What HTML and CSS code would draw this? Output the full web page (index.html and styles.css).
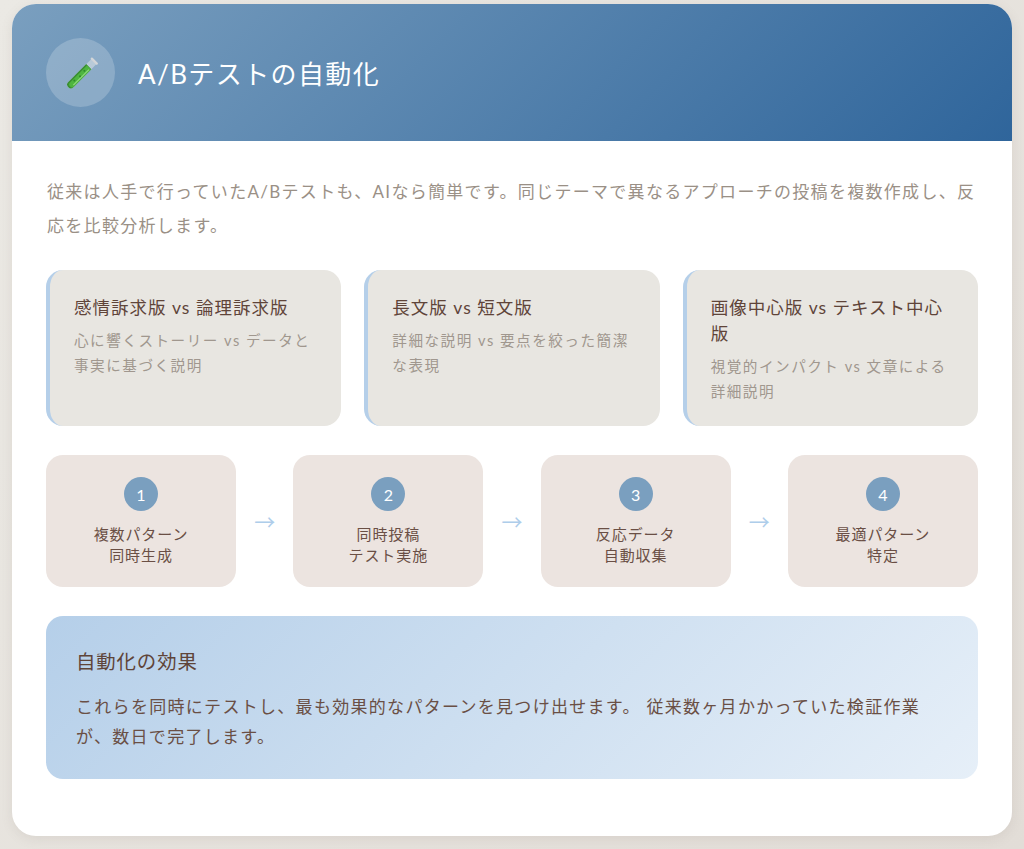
FILE: index.html
```html
<!DOCTYPE html>
<html lang="ja">
<head>
<meta charset="utf-8">
<title>A/Bテストの自動化</title>
<link rel="stylesheet" href="styles.css">
</head>
<body>
<main class="card">
  <header class="header">
    <div class="icon-circle">
      <svg class="tube" viewBox="0 0 32 32" width="32" height="32" aria-hidden="true">
        <g transform="rotate(45 16 16)">
          <path d="M13.4 -1h7.2v32.4a3.6 3.6 0 0 1-7.2 0z" fill="#d5dde2" fill-opacity=".6"/>
          <rect x="12.4" y="-3" width="9.2" height="2.4" rx="1.1" fill="#d3d6d8"/>
          <path d="M13.4 6h7.2v25.4a3.6 3.6 0 0 1-7.2 0z" fill="#3a8f32"/>
          <path d="M15 6.5h5.6v24a2.8 2.8 0 0 1-5.6 0z" fill="#4fb540"/>
          <path d="M18.6 8h1.2v22h-1.2z" fill="#8fd97f"/>
          <circle cx="16.8" cy="12" r="1" fill="#2f8a2a"/>
          <circle cx="17.6" cy="19" r="1" fill="#2f8a2a"/>
          <circle cx="16.6" cy="26" r="1" fill="#2f8a2a"/>
        </g>
      </svg>
    </div>
    <h1 class="title">A/Bテストの自動化</h1>
  </header>
  <div class="content">
    <p class="intro">従来は人手で行っていたA/Bテストも、AIなら簡単です。同じテーマで異なるアプローチの投稿を複数作成し、反応を比較分析します。</p>
    <section class="variants">
      <article class="variant">
        <h2 class="variant-title">感情訴求版 vs 論理訴求版</h2>
        <p class="variant-text">心に響くストーリー vs データと事実に基づく説明</p>
      </article>
      <article class="variant">
        <h2 class="variant-title">長文版 vs 短文版</h2>
        <p class="variant-text">詳細な説明 vs 要点を絞った簡潔な表現</p>
      </article>
      <article class="variant">
        <h2 class="variant-title">画像中心版 vs テキスト中心版</h2>
        <p class="variant-text">視覚的インパクト vs 文章による詳細説明</p>
      </article>
    </section>
    <section class="flow">
      <div class="step"><span class="num">1</span><p class="step-text">複数パターン<br>同時生成</p></div>
      <span class="arrow">→</span>
      <div class="step"><span class="num">2</span><p class="step-text">同時投稿<br>テスト実施</p></div>
      <span class="arrow">→</span>
      <div class="step"><span class="num">3</span><p class="step-text">反応データ<br>自動収集</p></div>
      <span class="arrow">→</span>
      <div class="step"><span class="num">4</span><p class="step-text">最適パターン<br>特定</p></div>
    </section>
    <section class="result">
      <h2 class="result-title">自動化の効果</h2>
      <p class="result-text">これらを同時にテストし、最も効果的なパターンを見つけ出せます。 従来数ヶ月かかっていた検証作業が、数日で完了します。</p>
    </section>
  </div>
</main>
</body>
</html>
```

FILE: styles.css
```css
* { box-sizing: border-box; }
html, body { margin: 0; height: 100%; }
body {
  background: linear-gradient(135deg, #ebe9e4 0%, #e2ddd7 100%);
  padding: 4px 12px 13px;
  font-family: "Lato", "Noto Sans CJK JP", sans-serif;
  overflow: hidden;
}
.card {
  width: 1000px;
  height: 832px;
  background: #fff;
  border-radius: 24px;
  overflow: hidden;
  box-shadow: 0 3px 12px rgba(120, 110, 100, .12);
}
.header {
  height: 137px;
  padding: 0 34px;
  display: flex;
  align-items: center;
  gap: 23px;
  background: linear-gradient(135deg, #7a9fbf 0%, #2f659b 100%);
}
.icon-circle {
  width: 69px;
  height: 69px;
  border-radius: 50%;
  background: rgba(255, 255, 255, .2);
  display: flex;
  align-items: center;
  justify-content: center;
}
.tube { overflow: visible; }
.title {
  margin: 0;
  color: #fff;
  font-size: 26px;
  font-weight: 400;
  letter-spacing: 1.4px;
}
.content { padding: 34px 34px 0; }
.intro {
  margin: 0 0 27px;
  padding-left: 1px;
  color: #9a9086;
  font-size: 17px;
  line-height: 34px;
  letter-spacing: 1.3px;
}
.variants {
  display: grid;
  grid-template-columns: repeat(3, 1fr);
  gap: 23px;
  margin-bottom: 29px;
}
.variant {
  background: #e8e6e1;
  border-left: 4.6px solid #b5cfe9;
  border-radius: 17px;
  padding: 25px 24px 22px;
}
.variant-title {
  margin: 0 0 8px;
  color: #5f4439;
  font-size: 17.5px;
  font-weight: 400;
  line-height: 26px;
  letter-spacing: 1px;
}
.variant-text {
  margin: 0;
  color: #a0978e;
  font-size: 14.6px;
  line-height: 24.6px;
  letter-spacing: 1.5px;
}
.flow {
  display: flex;
  align-items: center;
  justify-content: space-between;
  margin-bottom: 29px;
}
.step {
  width: 190px;
  height: 132px;
  padding-top: 22px;
  background: #ece4e0;
  border-radius: 17px;
  text-align: center;
}
.num {
  display: flex;
  align-items: center;
  justify-content: center;
  width: 34px;
  height: 34px;
  margin: 0 auto 13px;
  border-radius: 50%;
  background: #7a9fbf;
  color: #fff;
  font-size: 16px;
}
.step-text {
  margin: 0;
  color: #6a4f45;
  font-size: 15px;
  line-height: 21px;
  letter-spacing: .9px;
}
.arrow {
  color: #aecdea;
  font-size: 21px;
  line-height: 1;
  font-family: "Noto Sans CJK JP", sans-serif;
}
.result {
  height: 163px;
  padding: 29px 30px;
  border-radius: 17px;
  background: linear-gradient(135deg, #b5cfe9 0%, #e6eff8 100%);
}
.result-title {
  margin: 0 0 13px;
  color: #5f4439;
  font-size: 19.4px;
  font-weight: 400;
  line-height: 34px;
  letter-spacing: .9px;
}
.result-text {
  margin: 0;
  color: #6a4f45;
  font-size: 17px;
  line-height: 30px;
  letter-spacing: 1.3px;
}
```
